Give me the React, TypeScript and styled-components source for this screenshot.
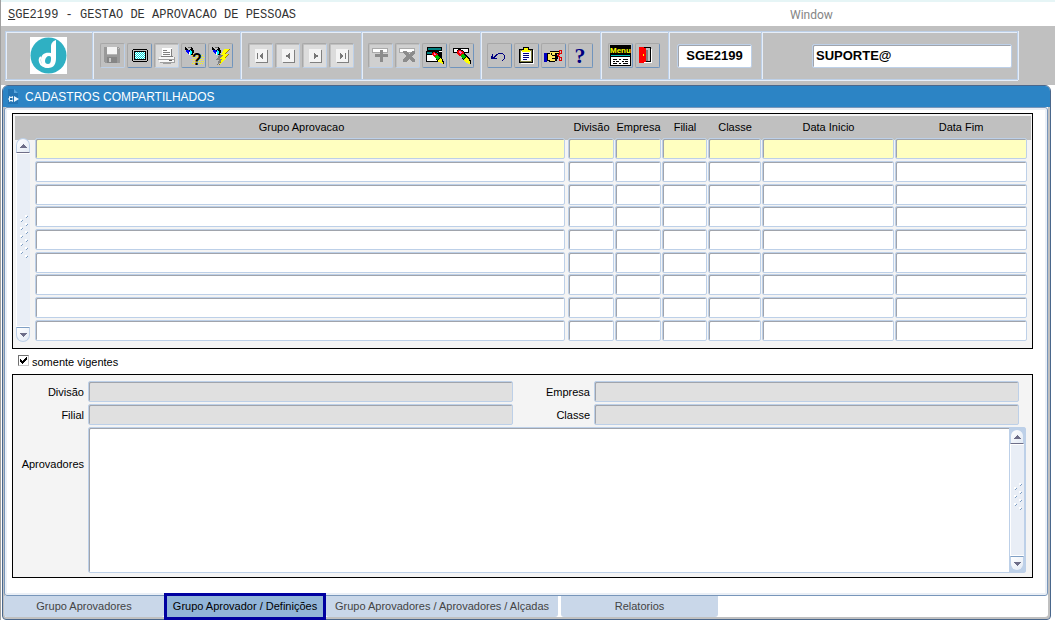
import React from 'react';
import styled, { createGlobalStyle, css } from 'styled-components';

const color = {
  chrome: '#c0c0c0',
  title: '#2c84c5',
  line: '#bdd0e8',
  lineLight: '#e6eef9',
  track: '#e9eef6',
  panel: '#f4f4f4',
  tab: '#c9d7e9',
  tabActive: '#92b5d8',
  navy: '#0000a0',
  outline: '#4a678c',
};

const GlobalStyle = createGlobalStyle`
  * { box-sizing: border-box; }
  body {
    margin: 0;
    background: #fff;
    color: #000;
    font-family: 'Liberation Sans', Arial, sans-serif;
    font-size: 11px;
    line-height: 16px;
  }
  button, input, textarea { font: inherit; color: inherit; margin: 0; padding: 0; }
`;

const Page = styled.div`
  border-left: 1px solid #a0a0a0;
`;

const MenuBar = styled.header`
  display: flex;
  align-items: center;
  height: 26px;
  padding: 2px 0 0 7px;
  border-top: 2px solid #e6f5f6;
  background: #fff;
`;

const ProgramTitle = styled.h1`
  flex: 0 0 782px;
  margin: 0;
  font-family: 'Liberation Mono', 'Courier New', monospace;
  font-size: 12px;
  font-weight: 400;
  color: #333;
`;

const MenuItem = styled.button`
  border: 0;
  background: none;
  font-family: Roboto, 'Open Sans', sans-serif;
  font-size: 12px;
  color: #858585;
`;

const ToolbarArea = styled.div`
  padding: 5px 37px 5px 4px;
  background: ${color.chrome};
`;

const Toolbar = styled.div`
  display: grid;
  grid-template-columns: 87px 148px 121px 119px 120px 68px 93px 1fr;
  height: 49px;
  border: 1px solid ${color.line};
  border-left-width: 0;
  box-shadow: inset 0 1px ${color.lineLight}, 0 1px ${color.lineLight}, 1px 0 ${color.lineLight};
`;

const ToolGroup = styled.div<{ $end?: boolean }>`
  display: flex;
  align-items: center;
  justify-content: ${(p) => (p.$end ? 'flex-end' : 'center')};
  gap: 2px;
  padding-right: ${(p) => (p.$end ? 5 : 1)}px;
  border-left: 1px solid ${color.line};
  box-shadow: inset 1px 0 ${color.lineLight};
`;

const ToolButton = styled.button`
  display: grid;
  place-items: center;
  width: 25px;
  height: 25px;
  border: 1px solid;
  border-color: #a8a8a8 #7094bd #7094bd #a8a8a8;
  border-radius: 2px;
  background: ${color.chrome};
  &:disabled {
    border-color: #a8a8a8 ${color.line} ${color.line} #a8a8a8;
  }
`;

const Icon = styled.svg.attrs({ width: 21, height: 21, viewBox: '0 0 21 21', shapeRendering: 'crispEdges' })`
  display: block;
  overflow: visible;
`;

const fieldFrame = css`
  border: 1px solid ${color.line};
  border-radius: 2px;
  box-shadow: inset 1px 1px #a0a4ac;
`;

const Field = styled.input<{ $tone?: string }>`
  display: block;
  width: 100%;
  height: 21px;
  padding: 0 4px;
  background: ${(p) => p.$tone ?? '#fff'};
  ${fieldFrame}
  outline: none;
`;

const HeaderField = styled(Field)<{ $w: number; $center?: boolean }>`
  width: ${(p) => p.$w}px;
  height: 24px;
  padding: 0 3px;
  font-size: 13px;
  font-weight: 700;
  text-align: ${(p) => (p.$center ? 'center' : 'left')};
`;

const Window = styled.main`
  margin: 0 4px 0 1px;
  border: 1px solid ${color.outline};
  border-radius: 6px 6px 4px 4px;
  background: #fff;
  box-shadow: inset -2px -2px ${color.chrome}, inset 2px 0 ${color.chrome};
`;

const TitleBar = styled.div`
  display: flex;
  align-items: center;
  gap: 5px;
  height: 21px;
  padding-left: 4px;
  border-radius: 5px 5px 0 0;
  background: ${color.title};
  color: #fff;
`;

const Title = styled.h2`
  margin: 0;
  font-size: 12px;
  font-weight: 400;
`;

const Body = styled.div`
  margin: 0 2px 0 1px;
  padding: 5px 14px 17px 7px;
  border: 1px solid #7896ba;
  border-radius: 3px;
  background: #fff;
  box-shadow: inset 0 0 0 2px #eaeff6;
`;

const GridPanel = styled.section`
  padding: 2px 1px 6px 2px;
  border: 1px solid #000;
  background: ${color.panel};
`;

const Table = styled.table`
  width: 100%;
  table-layout: fixed;
  border-collapse: collapse;
  background: linear-gradient(${color.chrome}, ${color.chrome}) 0 0 / 100% 24px no-repeat;
  th {
    height: 22px;
    padding: 0;
    font-weight: 400;
    white-space: nowrap;
  }
  th:last-child { padding-right: 4px; }
`;

const DataRow = styled.tr`
  height: 23px;
  &:nth-child(3n) { height: 22px; }
`;

const Cell = styled.td<{ $gap: number }>`
  padding: 0 ${(p) => p.$gap}px 0 0;
  vertical-align: top;
`;

const ScrollCell = styled.td`
  padding: 0 4px 0 1px;
  vertical-align: top;
`;

const Scroll = styled.div<{ $h: number }>`
  display: flex;
  flex-direction: column;
  width: 14px;
  height: ${(p) => p.$h}px;
`;

const ScrollButton = styled.button<{ $down?: boolean }>`
  display: grid;
  place-items: center;
  flex: 0 0 15px;
  border: 1px solid ${color.line};
  background: linear-gradient(135deg, #fff, #e3eaf4);
  ${(p) =>
    p.$down
      ? 'border-top-color: #7f9fc4; border-radius: 0 0 7px 7px;'
      : 'border-bottom-color: #6e6e88; border-radius: 7px 7px 0 0;'}
`;

const Track = styled.div`
  display: grid;
  place-items: center;
  flex: 1;
  padding-bottom: 8px;
  border: solid #fff;
  border-width: 1px 0 1px 1px;
  background: ${color.track};
`;

const CheckRow = styled.label`
  display: flex;
  align-items: center;
  gap: 3px;
  width: max-content;
  height: 25px;
  padding-left: 6px;
`;

const CheckBox = styled.span`
  position: relative;
  width: 11px;
  height: 11px;
  margin-bottom: 2px;
  input {
    display: block;
    width: 11px;
    height: 11px;
    appearance: none;
    border: 1px solid;
    border-color: #707070 #c8c8c8 #c8c8c8 #707070;
    background: #fff;
  }
  svg {
    position: absolute;
    inset: 0;
    display: none;
    pointer-events: none;
  }
  input:checked + svg { display: block; }
`;

const DetailPanel = styled.section`
  display: grid;
  grid-template-columns: 71px 1fr 73px 1fr 3px;
  grid-template-rows: 21px 21px auto;
  gap: 2px 4px;
  padding: 6px 6px 4px 0;
  border: 1px solid #000;
  background: ${color.panel};
`;

const Label = styled.label<{ $tall?: boolean; $right?: boolean }>`
  grid-column: ${(p) => (p.$right ? 3 : 1)};
  padding-top: ${(p) => (p.$tall ? 29 : 3)}px;
  text-align: right;
`;

const DetailField = styled(Field).attrs({ $tone: '#e0e0e0', readOnly: true })<{ $right?: boolean }>`
  grid-column: ${(p) => (p.$right ? 4 : 2)};
`;

const ListBox = styled.div`
  display: flex;
  grid-column: 2 / -1;
  height: 146px;
  background: #fff;
  ${fieldFrame}
  textarea {
    flex: 1;
    margin: 1px 0 0 1px;
    border: 0;
    outline: none;
    resize: none;
    background: transparent;
  }
`;

const ScrollGutter = styled.div`
  padding: 1px;
  background: ${color.line};
`;

const Tabs = styled.nav`
  display: flex;
  gap: 3px;
  height: 23px;
  padding-left: 1px;
`;

const Tab = styled.button<{ $w: number; $active?: boolean }>`
  width: ${(p) => p.$w}px;
  height: 21px;
  padding-bottom: 2px;
  border: 0;
  border-radius: 0 0 3px 3px;
  background: ${color.tab};
  color: #444;
  white-space: nowrap;
  ${(p) =>
    p.$active &&
    css`
      border-radius: 0;
      background: ${color.tabActive};
      color: #000;
      outline: 3px solid ${color.navy};
    `}
`;

/* ---------- icons ---------- */

type Shape = [fill: string, d: string];
const Shapes = ({ of }: { of: Shape[] }) => (
  <>
    {of.map(([fill, d], i) => (
      <path key={i} fill={fill} d={d} />
    ))}
  </>
);

const torch: Shape[] = [
  ['#000', 'M2 2h1v1h1v1h1v1h2v-1h1v-2h1v1h1v2h1v3h-1v2h-3v-1h-1v-2h-2v-1h-1v-1h-1z'],
  ['#00f', 'M3 5h3v1h1v4h-1v-1h-1v-1h-1v-1h-1z'],
  ['#0ff', 'M7 5h1v1h1v3h-1v1h-1z'],
  ['#fff', 'M6 7h1v3h-1z'],
  ['#707070', 'M5 2h3v1h-3z'],
];

const pale: Shape = ['#dcdcdc', 'M0 0h22v22h-22z'];
const sheet: Shape[] = [
  pale,
  ['#808080', 'M6 5h12v13h-12z'],
  ['#f4f4f4', 'M5 4h12v13h-12z'],
];
const slot = (edge: string): Shape[] => [
  [edge, 'M2 3h16v5h-16z'],
  ['#fff', 'M3 4h14v3h-14z'],
];

const pencil: Shape[] = [
  ['#000', 'M7 4h3v1h2v1h1v1h1v2h1v1h1v1h1v1h1v1h1v2h1v4h-3v-1h-2v-1h-1v-1h-1v-1h-1v-1h-1v-2h-1v-1h-1v-1h-1v-1h-1v-1h-1v-3h1z'],
  ['#f00000', 'M7 5h3v1h2v1h1v2h-2v2h-3v-1h-1v-1h-1v-3h1z'],
  ['#ff60c0', 'M8 6h2v1h1v1h-1v1h-1v-1h-1z'],
  ['#00c000', 'M11 9h2v1h1v1h1v1h-1v1h-1v1h-1v-1h-1v-1h-1v-2h1z'],
  ['#ff0', 'M15 12h1v1h1v1h1v2h1v3h-2v-1h-2v-1h-1v-1h-1v-2h1v-1h1z'],
];

const tools: { name: string; disabled?: boolean; art: React.ReactNode }[][] = [
  [
    {
      name: 'Salvar',
      disabled: true,
      art: (
        <Shapes
          of={[
            ['#999', 'M2 2h15v1h1v15h-15v-1h-1z'],
            ['#f4f4f4', 'M5 2h10v7h-10z'],
            ['#b4b4b4', 'M5 9h10v1h-10z'],
            ['#858585', 'M5 12h10v6h-10z'],
            ['#c8c8c8', 'M7 13h2v4h-2zM16 3h1v1h-1z'],
          ]}
        />
      ),
    },
    {
      name: 'Tela',
      art: (
        <>
          <Shapes
            of={[
              ['#000', 'M4 4h14v1h1v11h-1v1h-14v-1h-1v-11h1z'],
              ['#c0c0c0', 'M4 5h14v11h-14z'],
              ['#000', 'M5 6h12v9h-12z'],
              ['#fff', 'M6 7h10v7h-10z'],
            ]}
          />
          <path stroke="#00dede" strokeDasharray="1 1" d="M6 7.500h10M7 8.500h9M6 9.500h10M7 10.500h9M6 11.500h10M7 12.500h9M6 13.500h10" />
        </>
      ),
    },
    {
      name: 'Imprimir',
      disabled: true,
      art: (
        <Shapes
          of={[
            pale,
            ['#fff', 'M6 3h10v9h-10z'],
            ['#808080', 'M7 5h4v1h-4zM7 7h7v1h-7zM7 9h7v1h-7zM15 4h1v8h-1zM5 11h12v1h-12z'],
            ['#f8f8f8', 'M3 12h15v5h-15z'],
            ['#a0a0a0', 'M2 14h16v1h-16zM18 12h1v6h-15v-1h14zM7 17h8v2h-8z'],
            ['#606060', 'M13 15h3v1h-3z'],
          ]}
        />
      ),
    },
    {
      name: 'Entrar consulta',
      art: (
        <>
          <Shapes of={torch} />
          <path stroke="#ff0" strokeDasharray="1 1" d="M9 10.500h12M10 12.500h11M9 14.500h12M10 16.500h11M9 18.500h12" />
          <text x="9" y="20" fontSize="16" fontWeight="700">?</text>
        </>
      ),
    },
    {
      name: 'Executar consulta',
      art: (
        <Shapes
          of={[
            ...torch,
            ['#808080', 'M10 9h4l-4 5h3l-6 6 2-5h-3z'],
            ['#a08000', 'M14 4h6l-4 5h3l-4 4h2l-8 7 3-6h-2l3-4h-2z'],
            ['#ff0', 'M14 4h5l-4 5h3l-4 4h2l-6 6 2-5h-2l3-4h-2z'],
          ]}
        />
      ),
    },
  ],
  [
    { name: 'Primeiro', disabled: true, art: <Shapes of={[...sheet, ['#777', 'M7 8h1v6h-1zM12 8h1v6h-1v-1h-1v-1h-1v-2h1v-1h1z']]} /> },
    { name: 'Anterior', disabled: true, art: <Shapes of={[...sheet, ['#777', 'M12 8h1v6h-1v-1h-1v-1h-2v-2h2v-1h1z']]} /> },
    { name: 'Próximo', disabled: true, art: <Shapes of={[...sheet, ['#777', 'M10 8h1v1h1v1h2v2h-2v1h-1v1h-1z']]} /> },
    { name: 'Último', disabled: true, art: <Shapes of={[...sheet, ['#777', 'M9 8h1v1h1v1h1v2h-1v1h-1v1h-1zM14 8h1v6h-1z']]} /> },
  ],
  [
    { name: 'Inserir', disabled: true, art: <Shapes of={[['#d0d0d0', 'M0 0h22v22h-22z'], ...slot('#aaa'), ['#8c8c8c', 'M10 5h3v4h5v3h-5v5h-3v-5h-5v-3h5z']]} /> },
    { name: 'Remover', disabled: true, art: <Shapes of={[['#d0d0d0', 'M0 0h22v22h-22z'], ...slot('#aaa'), ['#8c8c8c', 'M6 6h3l3 3 3-3h3v2l-3 3 3 4v2h-3l-3-3-3 3h-3v-2l3-4-3-3z']]} /> },
    {
      name: 'Limpar tela',
      art: (
        <>
          <Shapes
            of={[
              ['#000', 'M3 2h15v13h-15z'],
              ['#008080', 'M4 3h13v2h-13z'],
              ['#fff', 'M4 6h14v1h-14z'],
              ['#000', 'M2 6h13v11h-13z'],
              ['#008080', 'M3 7h11v2h-11z'],
              ['#fff', 'M3 10h10v6h-10z'],
            ]}
          />
          <svg x="7" y="6" width="14" height="14" viewBox="5 4 16 16">
            <Shapes of={pencil} />
          </svg>
        </>
      ),
    },
    { name: 'Limpar registro', art: <Shapes of={[...slot('#000'), ...pencil]} /> },
  ],
  [
    {
      name: 'Desfazer',
      art: <Shapes of={[['#000080', 'M3 9h1v3h1v-1h1v-1h1v-1h2v-1h5v1h1v1h1v4h-1v1h-1v1h-1v-1h1v-1h1v-4h-1v-1h-5v1h-1v1h-1v1h-1v1h2v1h-6z']]} />,
    },
    {
      name: 'Área de transferência',
      art: (
        <Shapes
          of={[
            ['#fff', 'M5 5h13v14h-13z'],
            ['#000', 'M3 4h4v-2h6v2h4v14h-14z'],
            ['#808040', 'M4 5h12v12h-12z'],
            ['#fff', 'M5 6h10v10h-10z'],
            ['#ff0', 'M8 3h4v2h2v2h-8v-2h2z'],
            ['#000080', 'M7 8h6v1h-6zM7 10h6v1h-6zM7 12h6v1h-6zM7 14h4v1h-4z'],
          ]}
        />
      ),
    },
    {
      name: 'Recortar',
      art: (
        <>
          <Shapes
            of={[
              ['#000', 'M4 8h3v-2h10v3h-3v2h1v3h-1v2h-2v1h-6v-1h-2z'],
              ['#0000c0', 'M1 8h3v9h-3z'],
              ['#ffe860', 'M5 9h2v-2h9v1h-4v8h-5v-1h-2z'],
              ['#000', 'M9 10h4v1h-4zM9 13h4v1h-4zM8 8h1v2h-1z'],
            ]}
          />
          <path fill="none" stroke="#e00000" d="M16.500 5.500h2v3h-2zM16.500 12.500h2v3h-2zM14 11l3-2M14 10l3 2" />
        </>
      ),
    },
    { name: 'Ajuda', art: <text x="10" y="18" fontSize="22" fontWeight="700" textAnchor="middle" fill="#000080" fontFamily="Liberation Serif, serif">?</text> },
  ],
  [
    {
      name: 'Menu',
      art: (
        <>
          <Shapes
            of={[
              ['#000', 'M0 0h21v10h-21z'],
              ['#000', 'M0 10h21v11h-21z'],
              ['#00c0c0', 'M1 10h19v1h-19z'],
              ['#fff', 'M1 12h19v8h-19z'],
              ['#000', 'M3 14h4v1h-4zM9 14h2v1h-2zM13 14h5v1h-5zM3 16h2v1h-2zM6 16h3v1h-3zM12 16h2v1h-2zM15 16h3v1h-3zM3 18h4v1h-4zM9 18h2v1h-2zM13 18h5v1h-5z'],
            ]}
          />
          <text x="0" y="8" fontSize="8" fontWeight="700" fill="#ff0">Menu</text>
        </>
      ),
    },
    {
      name: 'Sair',
      art: (
        <Shapes
          of={[
            ['#fff', 'M14 4h1v14h-12v-1h11z'],
            ['#000', 'M3 2h11v15h-11z'],
            ['#c0c0c0', 'M9 3h4v13h-4z'],
            ['#808080', 'M9 5h2v11h-2z'],
            ['#f00', 'M2 2h5v1h2v14h-2v1h-5z'],
            ['#ff0', 'M6 9h1v2h-1z'],
          ]}
        />
      ),
    },
  ],
];

const Logo = () => (
  <svg width="37" height="37" viewBox="0 0 37 37" aria-label="Logo">
    <rect width="37" height="37" fill="#fff" />
    <circle cx="18.500" cy="18.500" r="18" fill="#2fb0c3" />
    <path
      fill="#fff"
      d="M26 3c-3 1-5 3-5 7v6c-6-1-10 1-10 7 0 5 3 8 7 8 6 0 8-4 8-10zM19 19c2 0 2 1 2 3 0 3-1 5-3 5s-3-1-3-3c0-3 2-5 4-5z"
    />
    <path fill="none" stroke="#fff" strokeWidth="2" d="M11 20c-1 1-2 2-1 5 1 4 5 5 9 5" />
  </svg>
);

const WindowIcon = () => (
  <svg width="13" height="16" viewBox="0 0 13 16" aria-hidden="true">
    <path fill="#2374b4" d="M1 0h6l4 4v11H1z" />
    <path fill="#5aa5dc" d="M7 0l4 4H7z" />
    <path fill="#eaf4fc" d="M7 7l5 3-5 3zM2 7l2 1 2-1v2l-1 1 1 1v2l-2-1-2 1v-2l-1-1 1-1z" />
    <path fill="#1f6ba6" d="M3 9h2v2H3z" />
  </svg>
);

const Arrow = ({ down }: { down?: boolean }) => (
  <svg width="7" height="4" viewBox="0 0 7 4" shapeRendering="crispEdges" aria-hidden="true">
    <path fill="#6e6e88" d={down ? 'M0 0h7v1h-1v1h-1v1h-1v1h-1v-1h-1v-1h-1v-1h-1z' : 'M3 0h1v1h1v1h1v1h1v1h-7v-1h1v-1h1v-1h1z'} />
  </svg>
);

const Grip = ({ dots }: { dots: number }) => {
  const h = (dots - 1) * 4 + 3;
  return (
    <svg width="8" height={h} viewBox={`0 0 8 ${h}`} shapeRendering="crispEdges" aria-hidden="true">
      {Array.from({ length: dots }, (_, i) => (
        <g key={i} transform={`translate(${i % 2 ? 0 : 5} ${i * 4})`}>
          <path fill="#fff" d="M0 0h2v2h-2z" />
          <path fill="#7f9fc4" d="M1 2h1v-1h1v1h-1v1h-1z" />
        </g>
      ))}
    </svg>
  );
};

const ScrollBar = ({ height, dots, name }: { height: number; dots: number; name: string }) => (
  <Scroll $h={height}>
    <ScrollButton type="button" aria-label={`${name}: subir`}>
      <Arrow />
    </ScrollButton>
    <Track>
      <Grip dots={dots} />
    </Track>
    <ScrollButton type="button" $down aria-label={`${name}: descer`}>
      <Arrow down />
    </ScrollButton>
  </Scroll>
);

/* ---------- content ---------- */

const columns: { title: string; width?: number; gap: number }[] = [
  { title: 'Grupo Aprovacao', gap: 3 },
  { title: 'Divisão', width: 47, gap: 1 },
  { title: 'Empresa', width: 47, gap: 1 },
  { title: 'Filial', width: 46, gap: 1 },
  { title: 'Classe', width: 54, gap: 1 },
  { title: 'Data Inicio', width: 133, gap: 1 },
  { title: 'Data Fim', width: 136, gap: 4 },
];
const rows = Array.from({ length: 9 }, (_, i) => i);

const tabs = [
  { title: 'Grupo Aprovadores', width: 160 },
  { title: 'Grupo Aprovador / Definições', width: 156, active: true },
  { title: 'Grupo Aprovadores / Aprovadores / Alçadas', width: 232 },
  { title: 'Relatorios', width: 157 },
];

export default function App() {
  return (
    <Page>
      <GlobalStyle />
      <MenuBar>
        <ProgramTitle>
          <u>S</u>GE2199 - GESTAO DE APROVACAO DE PESSOAS
        </ProgramTitle>
        <MenuItem type="button">Window</MenuItem>
      </MenuBar>

      <ToolbarArea>
        <Toolbar role="toolbar">
          <ToolGroup>
            <Logo />
          </ToolGroup>
          {tools.map((group, g) => (
            <ToolGroup key={g}>
              {group.map((tool) => (
                <ToolButton key={tool.name} type="button" aria-label={tool.name} disabled={tool.disabled}>
                  <Icon>{tool.art}</Icon>
                </ToolButton>
              ))}
            </ToolGroup>
          ))}
          <ToolGroup>
            <HeaderField aria-label="Programa" $w={75} $center defaultValue="SGE2199" />
          </ToolGroup>
          <ToolGroup $end>
            <HeaderField aria-label="Usuário" $w={200} defaultValue="SUPORTE@" />
          </ToolGroup>
        </Toolbar>
      </ToolbarArea>

      <Window>
        <TitleBar>
          <WindowIcon />
          <Title>CADASTROS COMPARTILHADOS</Title>
        </TitleBar>
        <Body>
          <GridPanel>
            <Table>
              <colgroup>
                <col width={20} />
                {columns.map((c) => (
                  <col key={c.title} width={c.width} />
                ))}
              </colgroup>
              <thead>
                <tr>
                  <th aria-label="Rolagem" />
                  {columns.map((c) => (
                    <th key={c.title} scope="col">
                      {c.title}
                    </th>
                  ))}
                </tr>
              </thead>
              <tbody>
                {rows.map((r) => (
                  <DataRow key={r}>
                    {r === 0 && (
                      <ScrollCell rowSpan={rows.length}>
                        <ScrollBar height={204} dots={11} name="Grupos" />
                      </ScrollCell>
                    )}
                    {columns.map((c) => (
                      <Cell key={c.title} $gap={c.gap}>
                        <Field aria-label={`${c.title} ${r + 1}`} $tone={r === 0 ? '#ffffc0' : '#fff'} />
                      </Cell>
                    ))}
                  </DataRow>
                ))}
              </tbody>
            </Table>
          </GridPanel>

          <CheckRow>
            <CheckBox>
              <input type="checkbox" defaultChecked />
              <svg width="11" height="11" viewBox="0 0 11 11" shapeRendering="crispEdges" aria-hidden="true">
                <path d="M2 4h1v1h1v1h1v-1h1v-1h1v-1h1v-1h1v3h-1v1h-1v1h-1v1h-1v1h-1v-1h-1v-1h-1z" />
              </svg>
            </CheckBox>
            somente vigentes
          </CheckRow>

          <DetailPanel>
            <Label htmlFor="divisao">Divisão</Label>
            <DetailField id="divisao" />
            <Label htmlFor="empresa" $right>
              Empresa
            </Label>
            <DetailField id="empresa" $right />
            <Label htmlFor="filial">Filial</Label>
            <DetailField id="filial" />
            <Label htmlFor="classe" $right>
              Classe
            </Label>
            <DetailField id="classe" $right />
            <Label htmlFor="aprovadores" $tall>
              Aprovadores
            </Label>
            <ListBox>
              <textarea id="aprovadores" />
              <ScrollGutter>
                <ScrollBar height={142} dots={7} name="Aprovadores" />
              </ScrollGutter>
            </ListBox>
          </DetailPanel>
        </Body>

        <Tabs>
          {tabs.map((t) => (
            <Tab key={t.title} type="button" $w={t.width} $active={t.active} aria-current={t.active ? 'page' : undefined}>
              {t.title}
            </Tab>
          ))}
        </Tabs>
      </Window>
    </Page>
  );
}
